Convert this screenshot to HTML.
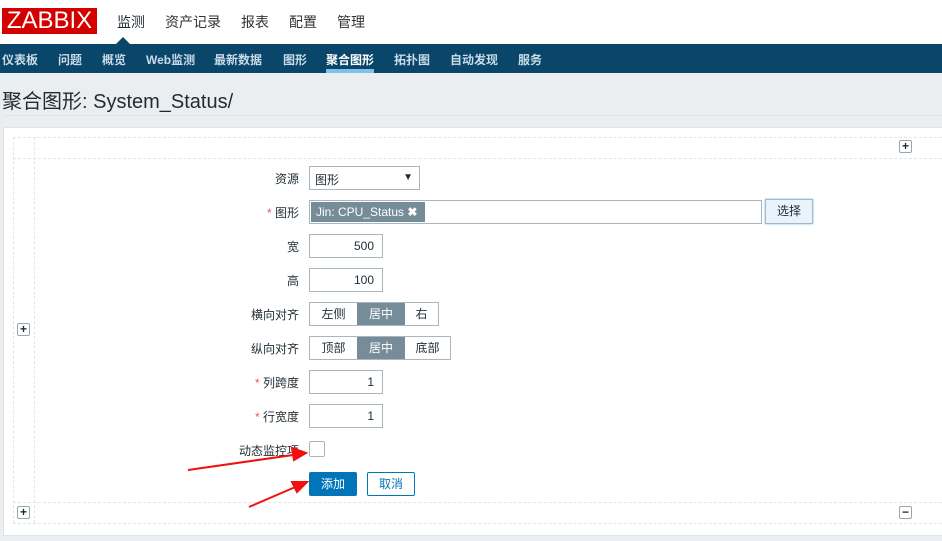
<!DOCTYPE html>
<html><head><meta charset="utf-8"><style>
*{margin:0;padding:0;box-sizing:border-box}
body{width:942px;height:541px;overflow:hidden;background:#ebeef0;font-family:"Liberation Sans","Noto Sans CJK SC",sans-serif;font-size:12px;color:#1f2c33;position:relative}
.a{position:absolute}
.hdr{left:0;top:0;width:942px;height:44px;background:#fff}
.logo{left:2px;top:8px;width:95px;height:26px;background:#d40000;color:#fff;font-size:24px;line-height:26px;text-align:center}
.top{top:12px;font-size:14px;color:#333}
.nav{left:0;top:44px;width:942px;height:29px;background:#0a466a}
.nav span{position:absolute;top:7px;color:#c9dce8;font-size:12px;font-weight:bold}
.panel{left:3px;top:127px;width:945px;height:409px;background:#fff;border:1px solid #dfe4e7}
.dh{height:0;border-top:1px dashed #e3e6e8}
.dv{width:0;border-left:1px dashed #e3e6e8}
.lbl{width:80px;text-align:right;font-size:12px;color:#1f2c33}
.in{border:1px solid #a9b6bd;background:#fff;height:24px;text-align:right;padding:4px 8px;font-size:12px}
.seg{border:1px solid #a9b6bd;height:24px;display:flex}
.seg div{line-height:22px;font-size:12px;text-align:center}
.seg .on{background:#768d99;color:#fff}
.pm{width:13px;height:13px;border:1px solid #9aa6ad;border-radius:2px;font-size:12px;line-height:10px;text-align:center;font-weight:bold;background:#fff}
.req{color:#e45959}
</style></head><body>
<div class="a hdr"></div>
<div class="a logo">ZABBIX</div>
<div class="a top" style="left:117px;color:#1f2c33">监测</div>
<div class="a top" style="left:165px">资产记录</div>
<div class="a top" style="left:241px">报表</div>
<div class="a top" style="left:289px">配置</div>
<div class="a top" style="left:337px">管理</div>
<div class="a" style="left:116px;top:37px;width:0;height:0;border-left:7px solid transparent;border-right:7px solid transparent;border-bottom:7px solid #0a466a"></div>
<div class="a nav">
<span style="left:2px">仪表板</span><span style="left:58px">问题</span><span style="left:102px">概览</span><span style="left:146px">Web监测</span><span style="left:214px">最新数据</span><span style="left:283px">图形</span><span style="left:326px;color:#fff">聚合图形</span><span style="left:394px">拓扑图</span><span style="left:450px">自动发现</span><span style="left:518px">服务</span>
<div class="a" style="left:326px;top:25px;width:48px;height:4px;background:#7ec0ee"></div>
</div>
<div class="a" style="left:2px;top:85px;font-size:20px;color:#1f2c33">聚合图形: System_Status/</div>
<div class="a" style="left:3px;top:115px;width:939px;height:1px;background:#dfe4e7"></div>
<div class="a panel"></div>
<div class="a dh" style="left:13px;top:137px;width:929px"></div>
<div class="a dh" style="left:13px;top:158px;width:929px"></div>
<div class="a dh" style="left:13px;top:502px;width:929px"></div>
<div class="a dh" style="left:13px;top:523px;width:929px"></div>
<div class="a dv" style="left:13px;top:137px;height:386px"></div>
<div class="a dv" style="left:34px;top:137px;height:386px"></div>
<div class="a pm" style="left:899px;top:140px">+</div>
<div class="a pm" style="left:17px;top:323px">+</div>
<div class="a pm" style="left:17px;top:506px">+</div>
<div class="a pm" style="left:899px;top:506px">−</div>

<div class="a lbl" style="left:219px;top:170px">资源</div>
<div class="a" style="left:309px;top:166px;width:111px;height:24px;border:1px solid #a9b6bd;padding:4px 5px">图形<span style="position:absolute;right:6px;top:5px;font-size:10px">▼</span></div>
<div class="a lbl" style="left:219px;top:204px"><span class="req">*</span> 图形</div>
<div class="a" style="left:309px;top:200px;width:453px;height:24px;border:1px solid #a9b6bd"></div>
<div class="a" style="left:311px;top:202px;width:114px;height:20px;background:#768d99;color:#fff;padding:3px 5px">Jin: CPU_Status <b>✖</b></div>
<div class="a" style="left:765px;top:199px;width:48px;height:25px;border:1px solid #a9b6bd;background:#e8f3fb;box-shadow:0 0 2px #7ec0ee;text-align:center;line-height:23px">选择</div>
<div class="a lbl" style="left:219px;top:238px">宽</div>
<div class="a in" style="left:309px;top:234px;width:74px">500</div>
<div class="a lbl" style="left:219px;top:272px">高</div>
<div class="a in" style="left:309px;top:268px;width:74px">100</div>
<div class="a lbl" style="left:219px;top:306px">横向对齐</div>
<div class="a seg" style="left:309px;top:302px;width:130px"><div style="width:47px">左侧</div><div class="on" style="width:48px">居中</div><div style="flex:1">右</div></div>
<div class="a lbl" style="left:219px;top:340px">纵向对齐</div>
<div class="a seg" style="left:309px;top:336px;width:142px"><div style="width:47px">顶部</div><div class="on" style="width:48px">居中</div><div style="flex:1">底部</div></div>
<div class="a lbl" style="left:219px;top:374px"><span class="req">*</span> 列跨度</div>
<div class="a in" style="left:309px;top:370px;width:74px">1</div>
<div class="a lbl" style="left:219px;top:408px"><span class="req">*</span> 行宽度</div>
<div class="a in" style="left:309px;top:404px;width:74px">1</div>
<div class="a lbl" style="left:219px;top:442px">动态监控项</div>
<div class="a" style="left:309px;top:441px;width:16px;height:16px;border:1px solid #a9b6bd;border-radius:2px"></div>
<div class="a" style="left:309px;top:472px;width:48px;height:24px;background:#0275b8;color:#fff;border-radius:2px;text-align:center;line-height:24px">添加</div>
<div class="a" style="left:367px;top:472px;width:48px;height:24px;border:1px solid #0275b8;color:#0275b8;border-radius:2px;text-align:center;line-height:22px">取消</div>
<svg class="a" style="left:0;top:0" width="942" height="541"><g stroke="#f01010" stroke-width="2" fill="#f01010">
<line x1="188" y1="470" x2="300" y2="454"/><polygon points="306,453 292,448 294,460"/>
<line x1="249" y1="507" x2="300" y2="485"/><polygon points="307,482 292,482 297,492"/></g></svg>
</body></html>
